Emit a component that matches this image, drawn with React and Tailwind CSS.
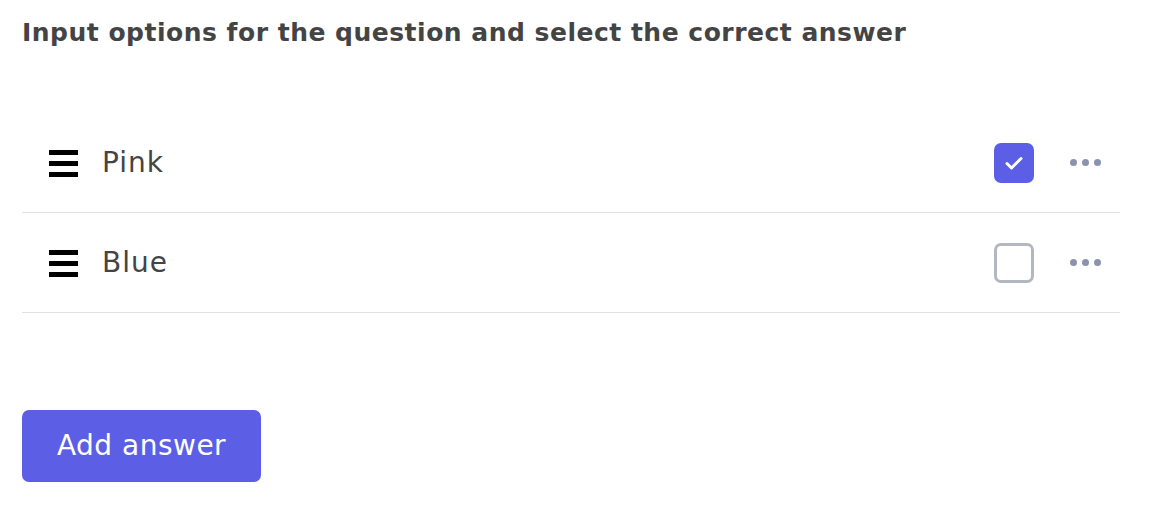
import React, { useState } from 'react';

const font = { fontFamily: '"DejaVu Sans", "Open Sans", sans-serif' };

function DragHandle() {
    return (
        <svg width="29" height="28" viewBox="0 0 29 28" className="shrink-0">
            <rect x="0" y="1" width="29" height="5" fill="#000" />
            <rect x="0" y="12" width="29" height="5" fill="#000" />
            <rect x="0" y="23" width="29" height="5" fill="#000" />
        </svg>
    );
}

function Dots() {
    return (
        <button className="flex items-center gap-[5px]">
            <span className="w-[7px] h-[7px] rounded-full bg-[#8a93ab]" />
            <span className="w-[7px] h-[7px] rounded-full bg-[#8a93ab]" />
            <span className="w-[7px] h-[7px] rounded-full bg-[#8a93ab]" />
        </button>
    );
}

export default function App() {
    const [answers, setAnswers] = useState([
        { id: 1, text: 'Pink', correct: true },
        { id: 2, text: 'Blue', correct: false },
    ]);

    const toggle = (id) => {
        setAnswers(answers.map(a => a.id === id ? { ...a, correct: !a.correct } : a));
    };

    return (
        <div className="min-h-screen bg-white px-[22px] pt-[17px]" style={font}>
            <h2 className="text-[25px] tracking-[0.5px] font-bold text-[#444444] leading-[32px]">
                Input options for the question and select the correct answer
            </h2>

            <div className="mt-[64px] w-[1098px]">
                {answers.map((a) => (
                    <div key={a.id} className="h-[100px] flex items-center border-b border-[#e2e2e2] pl-[27px] pr-[19px]">
                        <DragHandle />
                        <span className="ml-[24px] text-[28px] tracking-[1px] text-[#444444] flex-1">{a.text}</span>
                        <button
                            onClick={() => toggle(a.id)}
                            className={`w-[40px] h-[40px] rounded-[7px] flex items-center justify-center ${a.correct ? 'bg-[#5c5fe6]' : 'border-[3px] border-[#b3b8c0] bg-white'}`}
                        >
                            {a.correct && (
                                <svg width="18" height="14" viewBox="0 0 18 14">
                                    <path d="M2 7.5l4.5 4.5L16 2.5" fill="none" stroke="#fff" strokeWidth="3" strokeLinecap="round" strokeLinejoin="round" />
                                </svg>
                            )}
                        </button>
                        <div className="ml-[36px]">
                            <Dots />
                        </div>
                    </div>
                ))}
            </div>

            <button className="mt-[97px] w-[239px] h-[72px] rounded-[7px] bg-[#5c5fe6] text-white text-[28px] tracking-[0.5px]">
                Add answer
            </button>
        </div>
    );
}
